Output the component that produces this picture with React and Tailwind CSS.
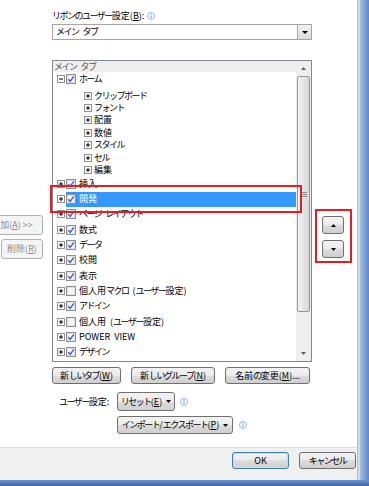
import React from 'react';

const FONT = "font-['Noto_Sans_CJK_JP',sans-serif] whitespace-nowrap";

const BTN = 'border border-[#707070] rounded-[3px] bg-[linear-gradient(#f2f2f2,#ebebeb_50%,#dddddd_50%,#cfcfcf)] text-black flex items-center justify-center';

// kana in the dialog font are narrow, so tighten kana runs
const J = ({ t }) => (
  <span>
    {t.split(/([\u3040-\u30ff]+| )/).map((s, i) =>
      s === ' ' ? (
        <span key={i} className="inline-block w-[4px]" />
      ) : /[\u3040-\u30ff]/.test(s) ? (
        <span key={i} className="tracking-[-1.5px]">{s}</span>
      ) : (
        <React.Fragment key={i}>{s}</React.Fragment>
      )
    )}
  </span>
);

const Info = () => (
  <svg width="8" height="8" viewBox="0 0 8 8" className="shrink-0">
    <circle cx="4" cy="4" r="3.5" fill="white" stroke="#7ba6dd" strokeWidth="0.8" />
    <line x1="4" y1="3.4" x2="4" y2="6.2" stroke="#5b8fd6" strokeWidth="1" />
    <rect x="3.5" y="1.6" width="1" height="1" fill="#5b8fd6" />
  </svg>
);

const Expander = ({ open }) => (
  <svg width="8" height="8" viewBox="0 0 8 8" className="shrink-0">
    <rect x="0.5" y="0.5" width="7" height="7" fill="white" stroke="#919191" />
    <line x1="2" y1="4" x2="6" y2="4" stroke="#000" />
    {!open && <line x1="4" y1="2" x2="4" y2="6" stroke="#000" />}
  </svg>
);

const Check = ({ on }) => (
  <svg width="10" height="10" viewBox="0 0 10 10" className="shrink-0">
    <rect x="0.5" y="0.5" width="9" height="9" fill="#f6f6f6" stroke="#8f8f8f" />
    <rect x="1.5" y="1.5" width="7" height="7" fill="none" stroke="#e2e2e2" />
    {on && <path d="M2.3 5.2 L4.2 7.4 L7.8 2.4" fill="none" stroke="#3a62cf" strokeWidth="1.5" />}
  </svg>
);

const Key = ({ k }) => (
  <span>
    (<span className="underline">{k}</span>)
  </span>
);

const Down = () => (
  <svg width="5" height="3" viewBox="0 0 5 3" className="shrink-0"><path d="M0 0 L2.5 3 L5 0 Z" fill="#000" /></svg>
);

const SUBS = ['クリップボード', 'フォント', '配置', '数値', 'スタイル', 'セル', '編集'];

const TOPS = [
  { t: '挿入', on: true },
  { t: '開発', on: true, sel: true },
  { t: 'ページ レイアウト', on: true },
  { t: '数式', on: true },
  { t: 'データ', on: true },
  { t: '校閲', on: true },
  { t: '表示', on: true },
  { t: '個人用マクロ (ユーザー設定)', on: false },
  { t: 'アドイン', on: true },
  { t: '個人用 (ユーザー設定)', on: false },
  { t: 'POWER VIEW', on: true },
  { t: 'デザイン', on: true },
  { t: 'レイアウト', on: true },
];

const TopRow = ({ t, on, sel }) => (
  <div className="h-[15.3px] flex items-center pl-[4px] shrink-0">
    <Expander />
    <div className={`ml-[1px] flex-1 h-full flex items-center ${sel ? 'bg-[#3399ff] text-white' : ''}`}>
      <Check on={on} />
      <span className="ml-[3px]"><J t={t} /></span>
    </div>
  </div>
);

const Scrollbar = () => (
  <div className="w-[15px] bg-[#eeeeee] flex flex-col items-center shrink-0">
    <div className="h-[15px] w-full flex items-center justify-center">
      <svg width="5" height="3" viewBox="0 0 5 3"><path d="M0 3 L2.5 0 L5 3 Z" fill="#606060" /></svg>
    </div>
    <div className="h-[236px] w-[13px] rounded-[2px] border border-[#979797] bg-[linear-gradient(90deg,#f5f5f5,#e6e6e6_50%,#d8d8d8)] flex flex-col items-center justify-center gap-[1px]">
      <div className="w-[6px] h-[1px] bg-[#8a8a8a]" />
      <div className="w-[6px] h-[1px] bg-[#8a8a8a]" />
      <div className="w-[6px] h-[1px] bg-[#8a8a8a]" />
    </div>
    <div className="flex-1" />
    <div className="h-[15px] w-full flex items-center justify-center">
      <svg width="5" height="3" viewBox="0 0 5 3"><path d="M0 0 L2.5 3 L5 0 Z" fill="#606060" /></svg>
    </div>
  </div>
);

export default function App() {
  return (
    <div className={`w-[369px] h-[486px] overflow-hidden flex flex-col text-[9px] leading-[12px] text-black ${FONT}`}>
      <div className="flex h-[480px]">
        <div className="w-[357px] flex flex-col">
          <div className="h-[447px] bg-white flex">
            {/* left: clipped add / remove buttons */}
            <div className="w-[52px] shrink-0 flex flex-col pt-[215px]">
              <div className="-ml-[19px] w-[62px] h-[20px] border border-[#adb2b5] rounded-[3px] bg-[#f4f4f4] text-[#8d8d8d] flex items-center justify-center">
                <span>追加<Key k="A" />&nbsp;&gt;&gt;</span>
              </div>
              <div className="ml-[1px] mt-[4px] w-[42px] h-[20px] border border-[#adb2b5] rounded-[3px] bg-[#f4f4f4] text-[#8d8d8d] flex items-center justify-center">
                <span>削除<Key k="R" /></span>
              </div>
            </div>

            {/* middle */}
            <div className="w-[260px] shrink-0 flex flex-col">
              <div className="mt-[10px] h-[12px] flex items-center gap-[3px]">
                <span><J t="リボンのユーザー設定" /><Key k="B" />:</span>
                <Info />
              </div>
              <div className="mt-[2px] h-[16px] border border-[#a5a5a5] flex items-center">
                <span className="pl-[3px] flex-1"><J t="メイン タブ" /></span>
                <div className="w-[14px] h-full border-l border-[#a5a5a5] bg-[linear-gradient(#f2f2f2,#dcdcdc)] flex items-center justify-center">
                  <svg width="6" height="3" viewBox="0 0 6 3"><path d="M0 0 L3 3 L6 0 Z" fill="#000" /></svg>
                </div>
              </div>

              <div className="relative mt-[20px] h-[302px] border border-[#828790] flex">
                <div className="flex-1 flex flex-col overflow-hidden">
                  <div className="h-[11px] bg-[#efefef] text-[#555] pl-[1px] flex items-center shrink-0"><J t="メイン タブ" /></div>
                  <div className="h-[14px] flex items-center pl-[4px] shrink-0">
                    <Expander open />
                    <span className="ml-[1px]"><Check on /></span>
                    <span className="ml-[3px]"><J t="ホーム" /></span>
                  </div>
                  <div className="h-[3.5px] shrink-0" />
                  {SUBS.map((s) => (
                    <div key={s} className="h-[12.4px] flex items-center pl-[31px] shrink-0">
                      <Expander />
                      <span className="ml-[2px]"><J t={s} /></span>
                    </div>
                  ))}
                  {TOPS.map((r) => (
                    <TopRow key={r.t} {...r} />
                  ))}
                </div>
                <Scrollbar />
                <div className="absolute -left-[3px] top-[124px] w-[252px] h-[28px] border-2 border-[#e81c24] pointer-events-none" />
              </div>

              <div className="mt-[5px] flex gap-[10px]">
                <div className={`${BTN} w-[69px] h-[17px]`}><span><J t="新しいタブ" /><Key k="W" /></span></div>
                <div className={`${BTN} w-[84px] h-[17px]`}><span><J t="新しいグループ" /><Key k="N" /></span></div>
                <div className={`${BTN} w-[85px] h-[17px]`}><span><J t="名前の変更" /><Key k="M" />...</span></div>
              </div>

              <div className="mt-[8px] flex items-center">
                <span className="w-[65px] pl-[7px]"><J t="ユーザー設定" />:</span>
                <div className={`${BTN} w-[58px] h-[19px] gap-[4px]`}>
                  <span><J t="リセット" /><Key k="E" /></span>
                  <Down />
                </div>
                <span className="ml-[5px]"><Info /></span>
              </div>
              <div className="mt-[5px] flex items-center pl-[65px]">
                <div className={`${BTN} w-[116px] h-[18px] gap-[4px]`}>
                  <span><J t="インポート/エクスポート" /><Key k="P" /></span>
                  <Down />
                </div>
                <span className="ml-[6px]"><Info /></span>
              </div>
            </div>

            {/* right: move up / down */}
            <div className="pl-[3px] pt-[209px]">
              <div className="w-[37px] h-[54px] border-2 border-[#e81c24] flex flex-col pl-[5px] pt-[5px]">
                <div className={`${BTN} w-[22px] h-[18px]`}>
                  <svg width="5" height="3" viewBox="0 0 5 3"><path d="M0 3 L2.5 0 L5 3 Z" fill="#000" /></svg>
                </div>
                <div className={`${BTN} w-[22px] h-[18px] mt-[6px]`}>
                  <Down />
                </div>
              </div>
            </div>
          </div>

          {/* bottom bar */}
          <div className="h-[33px] border-t border-[#dcdcdc] bg-[#f0f0f0] flex justify-end gap-[10px] pt-[4px] pr-[1px]">
            <div className="w-[57px] h-[17px] rounded-[3px] border border-[#3c7fb1] shadow-[inset_0_0_0_1px_#b9e2f8] bg-[linear-gradient(#f2f2f2,#ebebeb_50%,#dddddd_50%,#cfcfcf)] flex items-center justify-center">OK</div>
            <div className={`${BTN} w-[57px] h-[17px]`}><J t="キャンセル" /></div>
          </div>
        </div>
        <div className="w-[3px] bg-[#d3d9e1] border-l border-[#b8bfc8]" />
        <div className="w-[9px] bg-linear-to-r from-[#a7c0e3] to-[#5f86c6]" />
      </div>
      <div className="h-[6px] bg-linear-to-b from-[#6f93cf] to-[#3f63a3]" />
    </div>
  );
}
